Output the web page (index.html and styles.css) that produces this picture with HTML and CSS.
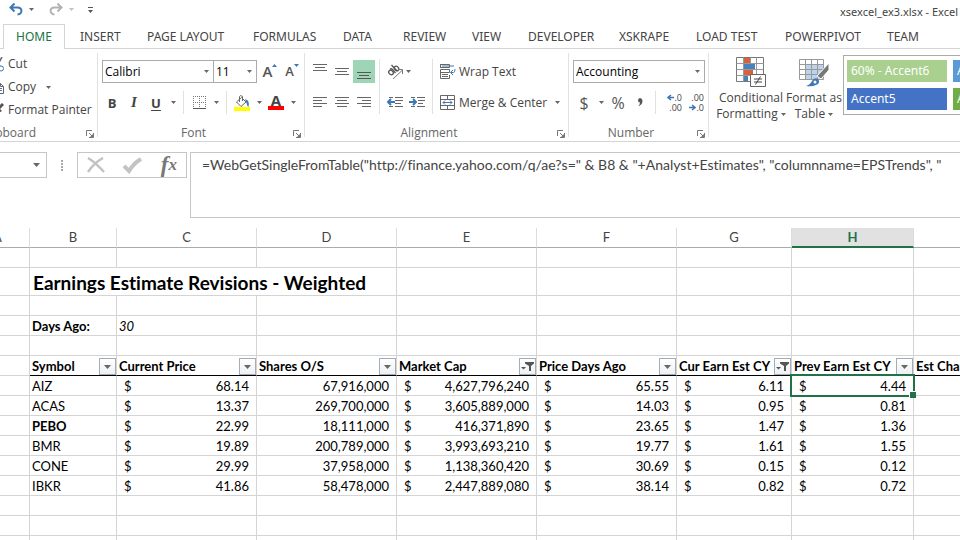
FILE: index.html
```
<!DOCTYPE html>
<html lang="en">
<head>
<meta charset="utf-8">
<title>xsexcel_ex3.xlsx - Excel</title>
<link rel="stylesheet" href="styles.css">
</head>
<body>
<svg class="defs" aria-hidden="true">
  <symbol id="caret" viewBox="0 0 5 3"><path d="M0 0h5L2.500 3z" fill="#666"/></symbol>
  <symbol id="launcher" viewBox="0 0 8 8"><path d="M.5 6V.5H6M3 3l3 3M7.500 3v4.500H3" fill="none" stroke="#777"/><path d="M7 4v3H4z" fill="#777"/></symbol>
  <symbol id="funnel" viewBox="0 0 13 9"><path d="M4 0h9v1.500L10 4v5H8V4L4 1.500z" fill="#555"/><path d="M0 5h5L2.500 7.500z" fill="#555"/></symbol>
  <symbol id="drop" viewBox="0 0 7 4"><path d="M0 0h7L3.500 4z" fill="#666"/></symbol>
</svg>

<header class="titlebar">
  <div class="quick">
    <button class="qbtn" aria-label="Undo"><svg width="14" height="13" viewBox="0 0 14 13"><path d="M1.500 4.500h7c5.500 0 5 6.500 0 7M5.500 0.500l-4 4 4 4" fill="none" stroke="#3b78b5" stroke-width="2"/></svg></button>
    <button class="qbtn" aria-label="Undo list"><svg width="5" height="3"><use href="#caret"/></svg></button>
    <button class="qbtn redo" aria-label="Redo"><svg width="14" height="13" viewBox="0 0 14 13"><path d="M12.500 4.500h-7c-5.500 0-5 6.500 0 7M8.500 0.500l4 4-4 4" fill="none" stroke="#b3b3b3" stroke-width="2"/></svg></button>
    <button class="qbtn faded" aria-label="Redo list"><svg width="5" height="3"><use href="#caret"/></svg></button>
    <button class="qbtn custom" aria-label="Customize toolbar"><svg width="5" height="6" viewBox="0 0 5 6"><path d="M0 0h5v1H0zM0 3h5L2.500 6z" fill="#555"/></svg></button>
  </div>
  <span class="doc">xsexcel_ex3.xlsx - Excel</span>
</header>

<nav class="tabs">
  <a class="active" href="#home">HOME</a><a href="#insert">INSERT</a><a href="#layout">PAGE LAYOUT</a><a href="#formulas">FORMULAS</a><a href="#data">DATA</a><a href="#review">REVIEW</a><a href="#view">VIEW</a><a href="#developer">DEVELOPER</a><a href="#xskrape">XSKRAPE</a><a href="#loadtest">LOAD TEST</a><a href="#powerpivot">POWERPIVOT</a><a href="#team">TEAM</a>
</nav>

<section class="ribbon">
  <div class="group clipboard">
    <div class="stack">
      <button class="wide"><svg width="12" height="15" viewBox="0 0 12 15"><path d="M2 0l6 9M10 0L5 9" stroke="#666" stroke-width="1.500" fill="none"/><circle cx="3" cy="12" r="2.500" fill="none" stroke="#3b78b5"/><circle cx="9" cy="11.500" r="2.500" fill="none" stroke="#3b78b5"/></svg>Cut</button>
      <button class="wide"><svg width="12" height="14" viewBox="0 0 12 14"><path d="M3.500 3.500h5l3 3v7h-8z" fill="#fff" stroke="#666"/><path d="M8.500 3.500v3h3M.5 10V.5H6" fill="none" stroke="#666"/><path d="M5 8.500h5M5 10.500h5" stroke="#3b78b5"/></svg>Copy<svg class="after" width="5" height="3"><use href="#caret"/></svg></button>
      <button class="wide"><svg width="12" height="14" viewBox="0 0 12 14"><path d="M11 1L7 5" stroke="#555" stroke-width="3"/><path d="M5 3l5 5-3 2-5-4z" fill="#555"/><path d="M2 6l4 4-2 3-4-3z" fill="#d9a060"/></svg>Format Painter</button>
    </div>
    <div class="label">Clipboard<button class="launch" aria-label="Clipboard settings"><svg width="8" height="8"><use href="#launcher"/></svg></button></div>
  </div>

  <div class="group font">
    <div class="rows">
      <div class="row combos">
        <label class="combo face"><select aria-label="Font"><option>Calibri</option></select><svg width="5" height="3"><use href="#caret"/></svg></label>
        <label class="combo size"><select aria-label="Font size"><option>11</option></select><svg width="5" height="3"><use href="#caret"/></svg></label>
        <button class="tool grow"><span>A</span><svg width="5" height="3" viewBox="0 0 5 3"><path d="M0 3h5L2.500 0z" fill="#3b78b5"/></svg></button>
        <button class="tool shrink"><span>A</span><svg width="5" height="3" viewBox="0 0 5 3"><path d="M0 0h5L2.500 3z" fill="#3b78b5"/></svg></button>
      </div>
      <div class="row tools">
        <button class="tool b">B</button>
        <button class="tool i">I</button>
        <button class="tool u">U</button>
        <button class="arrow" aria-label="Underline styles"><svg width="5" height="3"><use href="#caret"/></svg></button>
        <i class="vline"></i>
        <button class="tool" aria-label="Borders"><svg width="13" height="13" viewBox="0 0 13 13"><path d="M0 .5h13M.5 0v12M12.500 0v12M6.500 0v12M0 6.500h13" stroke="#777" stroke-dasharray="1 1" fill="none"/><path d="M0 12.500h13" stroke="#555"/></svg></button>
        <button class="arrow" aria-label="Border styles"><svg width="5" height="3"><use href="#caret"/></svg></button>
        <i class="vline"></i>
        <button class="tool" aria-label="Fill color"><svg width="16" height="16" viewBox="0 0 16 16"><path d="M2.500 7L7.500 2.500l4.500 4.500-5 4.500z" fill="#fff" stroke="#666"/><path d="M5.500 7V1.500q1-2 3 0V6" fill="none" stroke="#666"/><path d="M11 4q5 1 3.500 8Q13 11 12.500 8z" fill="#3b78b5"/><path d="M0 12h16v4H0z" fill="#ff0"/></svg></button>
        <button class="arrow" aria-label="Fill colors"><svg width="5" height="3"><use href="#caret"/></svg></button>
        <button class="tool color">A</button>
        <button class="arrow" aria-label="Font colors"><svg width="5" height="3"><use href="#caret"/></svg></button>
      </div>
    </div>
    <div class="label">Font<button class="launch" aria-label="Font settings"><svg width="8" height="8"><use href="#launcher"/></svg></button></div>
  </div>

  <div class="group align">
    <div class="blocks">
      <div class="rows">
        <div class="row">
          <button class="tool" aria-label="Top align"><svg width="14" height="16" viewBox="0 0 14 16"><path d="M0 .5h14M2 3.500h10M0 6.500h14" stroke="#666"/></svg></button>
          <button class="tool" aria-label="Middle align"><svg width="14" height="16" viewBox="0 0 14 16"><path d="M0 4.500h14M2 7.500h10M0 10.500h14" stroke="#666"/></svg></button>
          <button class="tool on" aria-label="Bottom align"><svg width="14" height="16" viewBox="0 0 14 16"><path d="M0 8.500h14M2 11.500h10M0 14.500h14" stroke="#555"/></svg></button>
        </div>
        <div class="row">
          <button class="tool" aria-label="Align left"><svg width="14" height="11" viewBox="0 0 14 11"><path d="M0 .5h14M0 3.500h9M0 6.500h14M0 9.500h9" stroke="#666"/></svg></button>
          <button class="tool" aria-label="Center"><svg width="14" height="11" viewBox="0 0 14 11"><path d="M0 .5h14M2 3.500h10M0 6.500h14M2 9.500h10" stroke="#666"/></svg></button>
          <button class="tool" aria-label="Align right"><svg width="14" height="11" viewBox="0 0 14 11"><path d="M0 .5h14M5 3.500h9M0 6.500h14M5 9.500h9" stroke="#666"/></svg></button>
        </div>
      </div>
      <i class="vline"></i>
      <div class="rows">
        <div class="row">
          <button class="tool" aria-label="Orientation"><svg width="17" height="16" viewBox="0 0 17 16"><g fill="none" stroke="#555" stroke-width="1.300"><ellipse cx="4" cy="8.500" rx="2" ry="2.500" transform="rotate(-45 4 8.500)"/><path d="M3 5.500q1-1.500 2.500 0L8.500 9"/><ellipse cx="9.500" cy="4.500" rx="2" ry="2.500" transform="rotate(-45 9.500 4.500)"/><path d="M4.500 1L10 7"/></g><path d="M6 15L15 6.500M11 5.500h4.500V10" fill="none" stroke="#777"/></svg></button>
          <button class="arrow near" aria-label="Orientations"><svg width="5" height="3"><use href="#caret"/></svg></button>
        </div>
        <div class="row">
          <button class="tool" aria-label="Decrease indent"><svg width="16" height="11" viewBox="0 0 16 11"><path d="M2 .5h4M8 .5h8M8 3.500h8M8 6.500h6M2 9.500h4M8 9.500h8" stroke="#666"/><path d="M1 5h7M4 2L1 5l3 3" fill="none" stroke="#3b78b5" stroke-width="2"/></svg></button>
          <button class="tool" aria-label="Increase indent"><svg width="16" height="11" viewBox="0 0 16 11"><path d="M2 .5h4M8 .5h8M9 3.500h7M9 6.500h5M2 9.500h4M8 9.500h8" stroke="#666"/><path d="M0 5h6M4 2l3 3-3 3" fill="none" stroke="#3b78b5" stroke-width="2"/></svg></button>
        </div>
      </div>
      <i class="vline"></i>
      <div class="rows">
        <div class="row"><button class="wide"><svg width="16" height="15" viewBox="0 0 16 15"><path d="M.5 0v4M.5.5h9v3h-9M.5 5.500h9v3h-9zM.5 8v6.500h9V11M2 10.500h6M2 12.500h6" fill="none" stroke="#666"/><path d="M2 2h12M11 8.500h2.500q1.500 0 1.500-3.500M13 6l-2.500 2.500L13 11" fill="none" stroke="#3b78b5"/></svg>Wrap Text</button></div>
        <div class="row merge"><button class="wide"><svg width="16" height="16" viewBox="0 0 16 16"><path d="M.5.5h14v14H.5zM.5 4.500h14M.5 10.500h14M7.500.5v4M7.500 10.500v4" fill="none" stroke="#666"/><path d="M3 7.500h9M5 5.500l-2 2 2 2M10 5.500l2 2-2 2" fill="none" stroke="#3b78b5"/></svg>Merge &amp; Center</button><button class="arrow" aria-label="Merge options"><svg width="5" height="3"><use href="#caret"/></svg></button></div>
      </div>
    </div>
    <div class="label">Alignment<button class="launch" aria-label="Alignment settings"><svg width="8" height="8"><use href="#launcher"/></svg></button></div>
  </div>

  <div class="group number">
    <div class="rows">
      <div class="row"><label class="combo format"><select aria-label="Number format"><option>Accounting</option></select><svg width="5" height="3"><use href="#caret"/></svg></label></div>
      <div class="row">
        <button class="tool sym">$</button>
        <button class="arrow" aria-label="Currencies"><svg width="5" height="3"><use href="#caret"/></svg></button>
        <button class="tool sym">%</button>
        <button class="tool" aria-label="Comma style"><svg width="6" height="9" viewBox="0 0 6 9"><path d="M1 2.500Q1 0 3 0t2.500 2.500Q5.500 7 1 8.500 3 6.500 3 4.500 1 4.500 1 2.500" fill="#555"/></svg></button>
        <i class="vline"></i>
        <button class="tool dec" aria-label="Increase decimal"><span><svg width="7" height="7" viewBox="0 0 7 7"><path d="M1 3.500h6M4 1L1 3.500 4 6" fill="none" stroke="#3b78b5" stroke-width="1.500"/></svg>.0</span><span>.00</span></button>
        <button class="tool dec" aria-label="Decrease decimal"><span>.00</span><span><svg width="7" height="7" viewBox="0 0 7 7"><path d="M0 3.500h6M3 1l3 2.500L3 6" fill="none" stroke="#3b78b5" stroke-width="1.500"/></svg>.0</span></button>
      </div>
    </div>
    <div class="label">Number<button class="launch" aria-label="Number settings"><svg width="8" height="8"><use href="#launcher"/></svg></button></div>
  </div>

  <div class="styles">
    <button class="big cond"><svg width="30" height="30" viewBox="0 0 30 30"><path d="M.5.5h27v24H.5z" fill="#fff" stroke="#777"/><path d="M.5 6.500h27M.5 12.500h27M.5 18.500h27M7.500.5v24M14.500.5v24M20.500.5v24" stroke="#999"/><path d="M8 1h6v5H8zM8 13h9v5H8z" fill="#d9603b"/><path d="M8 7h11v5H8zM8 19h4v5H8z" fill="#4682be"/><path d="M14.500 17.500h15v12h-15z" fill="#fff" stroke="#666"/><path d="M18 22h8M18 25h8M24.500 19.500l-5 8" stroke="#444"/></svg><span>Conditional<br>Formatting <svg width="5" height="3"><use href="#caret"/></svg></span></button>
    <button class="big"><svg width="30" height="30" viewBox="0 0 30 30"><path d="M.5 2.500h24v20H.5z" fill="#fff"/><path d="M7 8h18v14H7z" fill="#bdd3ea"/><path d="M.5 2.500h24v20H.5zM.5 7.500h24M.5 12.500h24M.5 17.500h24M6.500 2.500v20M12.500 2.500v20M18.500 2.500v20" fill="none" stroke="#999"/><path d="M30 6v7l-8 9-4-3z" fill="#777" stroke="#fff"/><path d="M7 29q4-1 6-5t6-2q3 4-2 6-4 2-10 1z" fill="#3b78b5"/><circle cx="16" cy="25" r="1.500" fill="#fff"/></svg><span>Format as<br>Table <svg width="5" height="3"><use href="#caret"/></svg></span></button>
    <div class="gallery">
      <button class="swatch green">60% - Accent6</button><button class="swatch sky">Accent1</button>
      <button class="swatch blue">Accent5</button><button class="swatch leaf">Accent6</button>
    </div>
  </div>
</section>

<section class="formula">
  <div class="namebox"><svg width="7" height="4"><use href="#drop"/></svg></div>
  <svg class="grip" width="2" height="11" viewBox="0 0 2 11"><path d="M0 0h2v2H0zM0 3h2v2H0zM0 6h2v2H0zM0 9h2v2H0z" fill="#aaa"/></svg>
  <div class="entry">
    <button aria-label="Cancel"><svg width="18" height="16" viewBox="0 0 18 16"><path d="M1 1q8 5 16 14M16 1Q7 6 1 15" fill="none" stroke="#c3c3c3" stroke-width="2.500"/></svg></button>
    <button aria-label="Enter"><svg width="20" height="17" viewBox="0 0 20 17"><path d="M1 9l5 5Q11 6 18 2" fill="none" stroke="#c3c3c3" stroke-width="4"/></svg></button>
    <button class="fx" aria-label="Insert function">f<sub>x</sub></button>
  </div>
  <textarea aria-label="Formula" spellcheck="false" wrap="off">=WebGetSingleFromTable("http://finance.yahoo.com/q/ae?s=" &amp; B8 &amp; "+Analyst+Estimates", "columnname=EPSTrends", "</textarea>
</section>

<main>
<table class="sheet">
  <colgroup><col class="ca"><col class="cb"><col class="cc"><col class="cc"><col class="cc"><col class="cc"><col class="cg"><col class="ch"><col></colgroup>
  <thead><tr><th>A</th><th>B</th><th>C</th><th>D</th><th>E</th><th>F</th><th>G</th><th class="cur">H</th><th></th></tr></thead>
  <tbody>
    <tr><td></td><td></td><td></td><td></td><td></td><td></td><td></td><td></td><td></td></tr>
    <tr class="title"><td></td><td colspan="3">Earnings Estimate Revisions - Weighted</td><td></td><td></td><td></td><td></td><td></td></tr>
    <tr><td></td><td></td><td></td><td></td><td></td><td></td><td></td><td></td><td></td></tr>
    <tr><td></td><td class="bold">Days Ago:</td><td class="ital">30</td><td></td><td></td><td></td><td></td><td></td><td></td></tr>
    <tr><td></td><td></td><td></td><td></td><td></td><td></td><td></td><td></td><td></td></tr>
    <tr class="heads"><td></td>
      <td><div>Symbol<button aria-label="Filter Symbol"><svg width="7" height="4"><use href="#drop"/></svg></button></div></td>
      <td><div>Current Price<button aria-label="Filter Current Price"><svg width="7" height="4"><use href="#drop"/></svg></button></div></td>
      <td><div>Shares O/S<button aria-label="Filter Shares"><svg width="7" height="4"><use href="#drop"/></svg></button></div></td>
      <td><div>Market Cap<button aria-label="Filter Market Cap"><svg width="13" height="9"><use href="#funnel"/></svg></button></div></td>
      <td><div>Price Days Ago<button aria-label="Filter Price Days Ago"><svg width="7" height="4"><use href="#drop"/></svg></button></div></td>
      <td><div>Cur Earn Est CY<button aria-label="Filter Current Estimate"><svg width="13" height="9"><use href="#funnel"/></svg></button></div></td>
      <td><div>Prev Earn Est CY<button aria-label="Filter Previous Estimate"><svg width="7" height="4"><use href="#drop"/></svg></button></div></td>
      <td><div>Est Change</div></td></tr>
    <tr><td></td><td>AIZ</td><td><div class="money"><span>$</span><span>68.14</span></div></td><td class="num">67,916,000</td><td><div class="money"><span>$</span><span>4,627,796,240</span></div></td><td><div class="money"><span>$</span><span>65.55</span></div></td><td><div class="money"><span>$</span><span>6.11</span></div></td><td class="selected"><div class="money"><span>$</span><span>4.44</span></div></td><td></td></tr>
    <tr><td></td><td>ACAS</td><td><div class="money"><span>$</span><span>13.37</span></div></td><td class="num">269,700,000</td><td><div class="money"><span>$</span><span>3,605,889,000</span></div></td><td><div class="money"><span>$</span><span>14.03</span></div></td><td><div class="money"><span>$</span><span>0.95</span></div></td><td><div class="money"><span>$</span><span>0.81</span></div></td><td></td></tr>
    <tr><td></td><td class="bold">PEBO</td><td><div class="money"><span>$</span><span>22.99</span></div></td><td class="num">18,111,000</td><td><div class="money"><span>$</span><span>416,371,890</span></div></td><td><div class="money"><span>$</span><span>23.65</span></div></td><td><div class="money"><span>$</span><span>1.47</span></div></td><td><div class="money"><span>$</span><span>1.36</span></div></td><td></td></tr>
    <tr><td></td><td>BMR</td><td><div class="money"><span>$</span><span>19.89</span></div></td><td class="num">200,789,000</td><td><div class="money"><span>$</span><span>3,993,693,210</span></div></td><td><div class="money"><span>$</span><span>19.77</span></div></td><td><div class="money"><span>$</span><span>1.61</span></div></td><td><div class="money"><span>$</span><span>1.55</span></div></td><td></td></tr>
    <tr><td></td><td>CONE</td><td><div class="money"><span>$</span><span>29.99</span></div></td><td class="num">37,958,000</td><td><div class="money"><span>$</span><span>1,138,360,420</span></div></td><td><div class="money"><span>$</span><span>30.69</span></div></td><td><div class="money"><span>$</span><span>0.15</span></div></td><td><div class="money"><span>$</span><span>0.12</span></div></td><td></td></tr>
    <tr><td></td><td>IBKR</td><td><div class="money"><span>$</span><span>41.86</span></div></td><td class="num">58,478,000</td><td><div class="money"><span>$</span><span>2,447,889,080</span></div></td><td><div class="money"><span>$</span><span>38.14</span></div></td><td><div class="money"><span>$</span><span>0.82</span></div></td><td><div class="money"><span>$</span><span>0.72</span></div></td><td></td></tr>
    <tr><td></td><td></td><td></td><td></td><td></td><td></td><td></td><td></td><td></td></tr>
    <tr><td></td><td></td><td></td><td></td><td></td><td></td><td></td><td></td><td></td></tr>
    <tr><td></td><td></td><td></td><td></td><td></td><td></td><td></td><td></td><td></td></tr>
  </tbody>
</table>
</main>
</body>
</html>
```
FILE: styles.css
```
* { box-sizing: border-box; }
body {
  margin: 0;
  overflow: hidden;
  background: #fff;
  color: #444;
  font: 12px/16px "Noto Sans", "Open Sans", sans-serif;
}
.defs { display: none; }
svg { display: block; flex: none; }
button {
  padding: 0;
  border: 0;
  background: none;
  color: inherit;
  font: inherit;
  display: flex;
  align-items: center;
  justify-content: center;
}

/* title bar */
.titlebar {
  display: flex;
  justify-content: space-between;
  height: 24px;
  padding: 1px 2px 0 9px;
}
.quick { display: flex; align-items: center; height: 17px; }
.qbtn + .qbtn { margin-left: 6px; }
.quick .redo { margin-left: 15px; }
.quick .custom { margin-left: 14px; }
.faded { opacity: .4; }
.doc { padding-top: 3px; font-size: 11px; white-space: nowrap; }

/* tabs */
.tabs {
  display: grid;
  grid-template-columns: 62px 67px 106px 90px 60px 69px 56px 91px 77px 89px 102px 1fr;
  height: 25px;
  padding-left: 3px;
  box-shadow: inset 0 -1px #d4d4d4;
}
.tabs a {
  padding: 0 0 0 15px;
  line-height: 25px;
  color: #444;
  text-decoration: none;
  white-space: nowrap;
}
.tabs .active {
  padding-left: 12px;
  border: 1px solid #d4d4d4;
  border-bottom: 0;
  background: #fff;
  color: #217346;
  line-height: 24px;
}

/* ribbon */
.ribbon {
  display: flex;
  height: 93px;
  padding-top: 4px;
  border-bottom: 1px solid #d4d4d4;
  font-family: "Open Sans", "Noto Sans", sans-serif;
}
.group {
  display: flex;
  flex-direction: column;
  flex: none;
  justify-content: space-between;
  background: linear-gradient(#e1e1e1, #e1e1e1) right top / 1px 84px no-repeat;
}
.clipboard { width: 118px; margin-left: -20px; }
.font { width: 207px; }
.align { width: 264px; }
.number { width: 140px; }
.label {
  position: relative;
  padding-right: 16px;
  color: #666;
  text-align: center;
}
.clipboard .label { padding-right: 62px; text-align: right; }
.launch { position: absolute; right: 4px; top: 5px; }

.stack { display: flex; flex-direction: column; gap: 7px; padding: 3px 0 0 12px; }
.stack .wide { justify-content: flex-start; height: 16px; }
.wide { gap: 4px; white-space: nowrap; }
.after { margin-left: 6px; }

.rows { display: flex; flex-direction: column; gap: 8px; padding: 7px 0 0; }
.font .rows, .number .rows { padding-left: 4px; }
.row { display: flex; height: 23px; }
.blocks { display: flex; padding-left: 4px; }
.tools { margin-left: -1px; }
.tool { width: 22px; flex: none; }
.arrow { width: 12px; flex: none; }
.near { width: 8px; justify-content: flex-start; }
.vline { flex: none; width: 1px; margin: 0 4px; background: #e1e1e1; }
.blocks .vline { margin-top: 6px; }
.on { background: #9fd5b7; }
.combo { position: relative; display: flex; }
.combo select {
  width: 100%;
  padding: 0 2px;
  border: 1px solid #ababab;
  border-radius: 0;
  background: #fff;
  appearance: none;
  color: #000;
  font: inherit;
}
.combo svg { position: absolute; right: 5px; top: 10px; }
.face { width: 112px; }
.size { width: 44px; margin-left: -1px; }
.size + .tool { margin-left: 2px; }
.format { width: 132px; }
.grow, .shrink { gap: 0; align-items: flex-start; color: #555; font-weight: 600; line-height: 23px; }
.grow { font-size: 15px; }
.shrink { font-size: 13px; }
.grow svg, .shrink svg { margin-top: 4px; }
.b, .u { font-size: 13px; font-weight: 700; }
.i { font: italic 700 15px "Liberation Serif", serif; }
.u { text-decoration: underline; text-underline-offset: 2px; }
.tools .color {
  width: 16px;
  height: 16px;
  margin: 3px;
  border-bottom: 4px solid #f00;
  font-size: 15px;
  font-weight: 700;
  line-height: 12px;
}
.sym { font-size: 16px; color: #555; }
.dec { flex-direction: column; align-items: flex-end; font-size: 9px; line-height: 10px; }
.dec span { display: flex; align-items: center; }
.blocks .wide { gap: 3px; padding-left: 3px; }
.merge .arrow { margin-left: 4px; }

.styles { display: flex; flex: 1; min-width: 0; overflow: hidden; padding: 2px 0 0 8px; }
.big { flex: none; flex-direction: column; justify-content: flex-start; width: 58px; padding-top: 2px; }
.big.cond { width: 68px; }
.big span { margin-top: 3px; text-align: center; white-space: nowrap; }
.big span svg { display: inline-block; vertical-align: middle; }
.gallery {
  display: grid;
  flex: none;
  grid-template-columns: 100px 100px;
  grid-template-rows: 22px 22px;
  gap: 6px;
  height: 60px;
  padding: 4px 3px;
  border: 1px solid #ababab;
}
.swatch { justify-content: flex-start; padding-left: 4px; color: #fff; font-family: "Noto Sans", sans-serif; white-space: nowrap; }
.green { background: #a9d08e; }
.blue { background: #4472c4; }
.sky { background: #5b9bd5; }
.leaf { background: #70ad47; }

/* formula bar */
.formula { display: flex; align-items: flex-start; padding: 10px 0; }
.namebox {
  display: flex;
  align-items: center;
  justify-content: flex-end;
  width: 47px;
  height: 26px;
  padding-right: 6px;
  border: 1px solid #c6c6c6;
  border-left: 0;
}
.grip { margin: 8px 14px 0; }
.entry {
  display: flex;
  justify-content: space-around;
  width: 110px;
  height: 26px;
  border: 1px solid #c6c6c6;
}
.fx { font: italic 700 23px/22px "Liberation Serif", serif; color: #777; }
.fx sub { font-size: 17px; line-height: 20px; vertical-align: baseline; }
.formula textarea {
  flex: 1;
  min-width: 0;
  height: 66px;
  margin: 0 0 0 3px;
  padding: 2px 0 2px 11px;
  border: 1px solid #c6c6c6;
  border-right: 0;
  overflow: hidden;
  resize: none;
  color: #444;
  font: 14px/19px Lato, "Noto Sans", sans-serif;
  font-variant-ligatures: none;
}

/* sheet */
main { margin-left: -34px; }
.sheet {
  width: 100%;
  border-collapse: separate;
  border-spacing: 0;
  table-layout: fixed;
  color: #000;
  font: 13px/17px Lato, "Noto Sans", sans-serif;
  font-variant-ligatures: none;
}
.ca { width: 64px; }
.cb { width: 87px; }
.cc { width: 140px; }
.cg { width: 115px; }
.ch { width: 122px; }
.sheet th {
  height: 20px;
  padding: 0;
  border-right: 1px solid #dcdcdc;
  border-bottom: 1px solid #ababab;
  color: #444;
  font-weight: 400;
}
.sheet .cur { border-bottom: 2px solid #217346; background: #e1e1e1; color: #217346; font-weight: 700; }
.sheet td {
  height: 20px;
  padding: 2px 0 0 2px;
  border-right: 1px solid #d4d4d4;
  border-bottom: 1px solid #d4d4d4;
  white-space: nowrap;
}
.sheet tr > :last-child { border-right: 0; }
.sheet .title td { height: 28px; padding-left: 3px; font-size: 19px; font-weight: 700; line-height: 25px; }
.bold { font-weight: 700; }
.ital { font-style: italic; }
.sheet .num { padding-right: 7px; text-align: right; }
.money { display: flex; justify-content: space-between; padding: 0 7px 0 5px; }
.heads { font-weight: 700; }
.heads td + td { border-bottom-color: #000; }
.heads div { display: flex; justify-content: space-between; height: 17px; }
.heads button {
  flex: none;
  width: 17px;
  height: 17px;
  border: 1px solid #a3acb9;
  background: linear-gradient(#fff, #eef0f4);
}
.selected { position: relative; }
.selected::before {
  content: "";
  position: absolute;
  inset: -2px;
  border: 2px solid #217346;
}
.selected::after {
  content: "";
  position: absolute;
  right: -3px;
  bottom: -3px;
  width: 6px;
  height: 6px;
  border: 1px solid #fff;
  border-width: 1px 0 0 1px;
  background: #217346;
}
```
